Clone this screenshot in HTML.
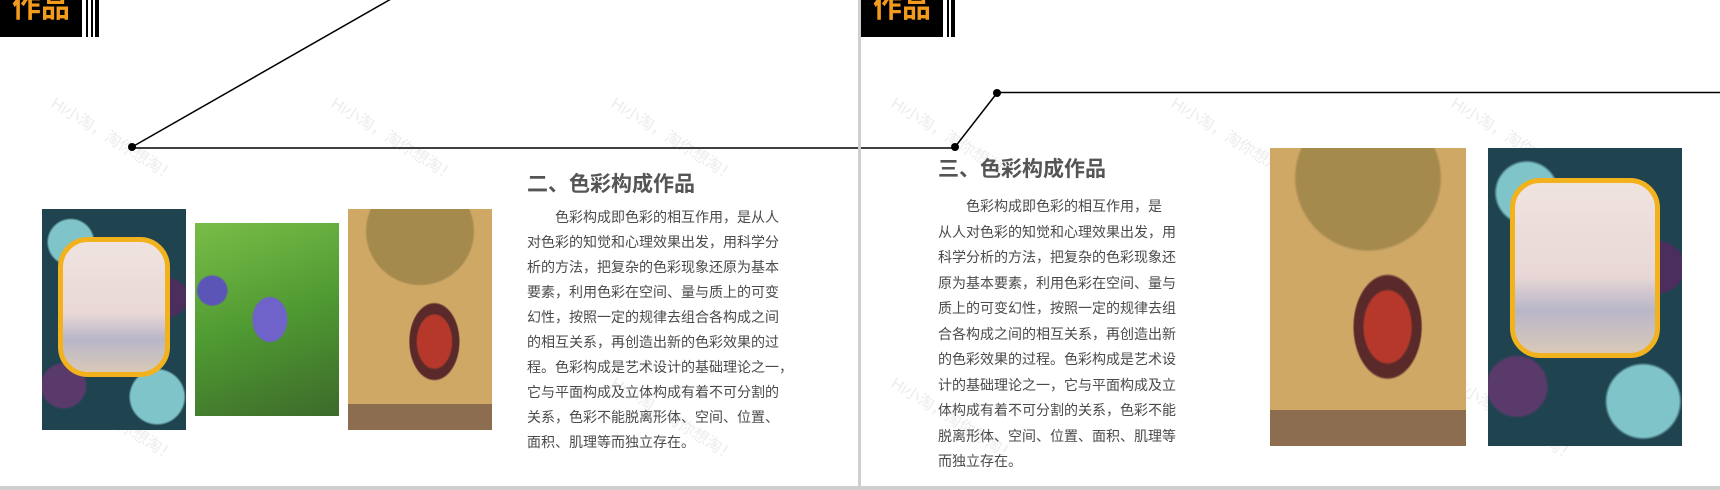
<!DOCTYPE html>
<html><head><meta charset="utf-8"><style>
*{margin:0;padding:0;box-sizing:border-box}
body{width:1720px;height:490px;background:#fff;position:relative;overflow:hidden;font-family:"Liberation Sans","Noto Sans CJK SC",sans-serif}
.abs{position:absolute}
.box{background:#000;height:37px;top:0;overflow:hidden}
.box span{position:absolute;left:12px;top:-16px;color:#f39b1c;font-weight:bold;font-size:29px;letter-spacing:0px}
.bar{background:#000;top:0;height:37px}
.sub{top:-6px;font-size:8px;color:#999;letter-spacing:1px;font-family:"Liberation Mono",monospace}
h2{position:absolute;font-size:21px;color:#555;font-weight:bold;line-height:26px;white-space:nowrap}
.txt{position:absolute;font-size:14px;color:#4a4a4a;white-space:nowrap}
.wm{position:absolute;color:#ececec;font-size:16px;transform:rotate(32deg);transform-origin:left top;white-space:nowrap}
.tou{background:radial-gradient(circle at 20% 15%,#7fc4c8 0 10%,transparent 11%),radial-gradient(circle at 80% 85%,#7fc4c8 0 12%,transparent 13%),radial-gradient(circle at 15% 80%,#5a3a6a 0 10%,transparent 11%),radial-gradient(circle at 88% 40%,#4b2d5e 0 10%,transparent 11%),#1f4450}
.frame{position:absolute;border:5px solid #f1b21e;border-radius:30px;background:linear-gradient(#efe3e0 0,#e8d7d6 55%,#b8b6c8 75%,#d9c9b8 100%)}
.tan{background:radial-gradient(ellipse at 60% 60%,#b5382a 0 14%,#5a2a2a 15% 20%,transparent 21%),radial-gradient(circle at 50% 10%,#a58a4e 0 25%,transparent 26%),#cfa866}
.tan .band{position:absolute;left:0;right:0;bottom:0;background:#8c6d4f}
.flower{background:radial-gradient(ellipse at 52% 50%,#6f62c9 0 16%,transparent 17%),radial-gradient(ellipse at 12% 35%,#5c55b8 0 8%,transparent 9%),linear-gradient(160deg,#79bd48,#4f9a32 50%,#3d6a2a)}
</style></head><body>

<div class="wm" style="left:60px;top:90px">Hi小淘，淘你想淘！</div>
<div class="wm" style="left:340px;top:90px">Hi小淘，淘你想淘！</div>
<div class="wm" style="left:620px;top:90px">Hi小淘，淘你想淘！</div>
<div class="wm" style="left:900px;top:90px">Hi小淘，淘你想淘！</div>
<div class="wm" style="left:1180px;top:90px">Hi小淘，淘你想淘！</div>
<div class="wm" style="left:1460px;top:90px">Hi小淘，淘你想淘！</div>
<div class="wm" style="left:60px;top:370px">Hi小淘，淘你想淘！</div>
<div class="wm" style="left:620px;top:370px">Hi小淘，淘你想淘！</div>
<div class="wm" style="left:900px;top:370px">Hi小淘，淘你想淘！</div>
<div class="wm" style="left:1460px;top:370px">Hi小淘，淘你想淘！</div>

<svg class="abs" style="left:0;top:0" width="1720" height="490">
<line x1="132" y1="147" x2="391" y2="-1" stroke="#000" stroke-width="1.5"/>
<line x1="132" y1="148" x2="955" y2="148" stroke="#000" stroke-width="1.5"/>
<line x1="955" y1="147" x2="997" y2="93" stroke="#000" stroke-width="1.5"/>
<line x1="997" y1="92.5" x2="1720" y2="92.5" stroke="#000" stroke-width="1.5"/>
<circle cx="132" cy="147" r="4" fill="#000"/>
<circle cx="955" cy="147" r="4" fill="#000"/>
<circle cx="997" cy="93" r="4" fill="#000"/>
</svg>

<div class="abs" style="left:858px;top:0;width:3px;height:490px;background:#cfcfcf"></div>
<div class="abs" style="left:0;top:486px;width:1720px;height:4px;background:#cfcfcf"></div>

<div class="abs box" style="left:0;width:82px"><span>作品</span></div>
<div class="abs bar" style="left:86px;width:2px"></div>
<div class="abs bar" style="left:91px;width:2px"></div>
<div class="abs bar" style="left:95px;width:4px"></div>
<div class="abs sub" style="left:112px">PERSONAL COLLECTION OF WORKS 07</div>

<div class="abs box" style="left:861px;width:82px"><span>作品</span></div>
<div class="abs bar" style="left:947px;width:2px"></div>
<div class="abs bar" style="left:951px;width:4px"></div>
<div class="abs sub" style="left:973px">PERSONAL COLLECTION OF WORKS 07</div>

<div class="abs tou" style="left:42px;top:209px;width:144px;height:221px">
 <div class="frame" style="left:16px;top:28px;width:112px;height:140px"></div>
</div>
<div class="abs flower" style="left:195px;top:223px;width:144px;height:193px"></div>
<div class="abs tan" style="left:348px;top:209px;width:144px;height:221px"><div class="band" style="height:26px"></div></div>

<h2 style="left:527px;top:172px">二、色彩构成作品</h2>
<div class="txt" style="left:527px;top:205px;line-height:25px">　　色彩构成即色彩的相互作用，是从人<br>对色彩的知觉和心理效果出发，用科学分<br>析的方法，把复杂的色彩现象还原为基本<br>要素，利用色彩在空间、量与质上的可变<br>幻性，按照一定的规律去组合各构成之间<br>的相互关系，再创造出新的色彩效果的过<br>程。色彩构成是艺术设计的基础理论之一，<br>它与平面构成及立体构成有着不可分割的<br>关系，色彩不能脱离形体、空间、位置、<br>面积、肌理等而独立存在。</div>

<h2 style="left:938px;top:157px">三、色彩构成作品</h2>
<div class="txt" style="left:938px;top:194px;line-height:25.5px">　　色彩构成即色彩的相互作用，是<br>从人对色彩的知觉和心理效果出发，用<br>科学分析的方法，把复杂的色彩现象还<br>原为基本要素，利用色彩在空间、量与<br>质上的可变幻性，按照一定的规律去组<br>合各构成之间的相互关系，再创造出新<br>的色彩效果的过程。色彩构成是艺术设<br>计的基础理论之一，它与平面构成及立<br>体构成有着不可分割的关系，色彩不能<br>脱离形体、空间、位置、面积、肌理等<br>而独立存在。</div>

<div class="abs tan" style="left:1270px;top:148px;width:196px;height:298px"><div class="band" style="height:36px"></div></div>
<div class="abs tou" style="left:1488px;top:148px;width:194px;height:298px">
 <div class="frame" style="left:22px;top:30px;width:150px;height:180px"></div>
</div>

</body></html>
